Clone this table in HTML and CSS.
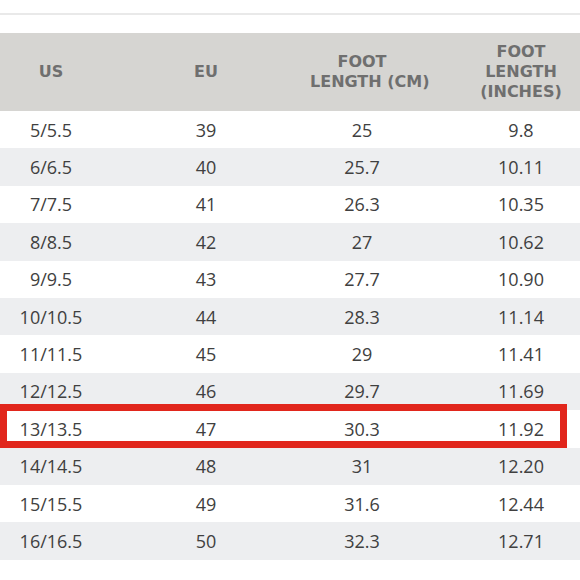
FILE: index.html
```html
<!DOCTYPE html>
<html>
<head>
<meta charset="utf-8">
<link rel="stylesheet" href="styles.css">
</head>
<body>
<div class="page">
  <div class="topline"></div>
  <div class="table">
    <div class="row head">
      <div class="cell">US</div>
      <div class="cell">EU</div>
      <div class="cell">FOOT<br>LENGTH (CM)</div>
      <div class="cell c4">FOOT<br>LENGTH<br>(INCHES)</div>
    </div>
    <div class="row"><div class="cell">5/5.5</div><div class="cell">39</div><div class="cell">25</div><div class="cell c4">9.8</div></div>
    <div class="row alt"><div class="cell">6/6.5</div><div class="cell">40</div><div class="cell">25.7</div><div class="cell c4">10.11</div></div>
    <div class="row"><div class="cell">7/7.5</div><div class="cell">41</div><div class="cell">26.3</div><div class="cell c4">10.35</div></div>
    <div class="row alt"><div class="cell">8/8.5</div><div class="cell">42</div><div class="cell">27</div><div class="cell c4">10.62</div></div>
    <div class="row"><div class="cell">9/9.5</div><div class="cell">43</div><div class="cell">27.7</div><div class="cell c4">10.90</div></div>
    <div class="row alt"><div class="cell">10/10.5</div><div class="cell">44</div><div class="cell">28.3</div><div class="cell c4">11.14</div></div>
    <div class="row"><div class="cell">11/11.5</div><div class="cell">45</div><div class="cell">29</div><div class="cell c4">11.41</div></div>
    <div class="row alt"><div class="cell">12/12.5</div><div class="cell">46</div><div class="cell">29.7</div><div class="cell c4">11.69</div></div>
    <div class="row highlight"><div class="cell">13/13.5</div><div class="cell">47</div><div class="cell">30.3</div><div class="cell c4">11.92</div></div>
    <div class="row alt"><div class="cell">14/14.5</div><div class="cell">48</div><div class="cell">31</div><div class="cell c4">12.20</div></div>
    <div class="row"><div class="cell">15/15.5</div><div class="cell">49</div><div class="cell">31.6</div><div class="cell c4">12.44</div></div>
    <div class="row alt"><div class="cell">16/16.5</div><div class="cell">50</div><div class="cell">32.3</div><div class="cell c4">12.71</div></div>
  </div>
</div>
</body>
</html>
```
FILE: styles.css
```css
html, body {
  margin: 0;
  padding: 0;
  background: #ffffff;
  overflow: hidden;
}
.page {
  width: 580px;
  height: 580px;
  padding-top: 13px;
  box-sizing: border-box;
}
.topline {
  height: 2px;
  background: #e9e9e9;
  margin-bottom: 18px;
}
.table {
  width: 580px;
}
.row {
  display: grid;
  grid-template-columns: 102px 208px 104px 166px;
  height: 37.4px;
  align-items: center;
  font-family: "Open Sans", "Noto Sans", sans-serif;
  font-size: 18px;
  color: #404040;
  background: #ffffff;
}
.row.alt {
  background: #edeef0;
}
.cell {
  text-align: center;
  white-space: nowrap;
}
.cell.c4 {
  padding-left: 48px;
}
.row.head {
  height: 78px;
  background: #d6d5d2;
  font-family: "DejaVu Sans", sans-serif;
  font-weight: bold;
  font-size: 16px;
  line-height: 20px;
  color: #6f6f6f;
}
.row.highlight {
  position: relative;
}
.row.highlight::after {
  content: "";
  position: absolute;
  left: 0;
  right: 13px;
  top: -6px;
  bottom: 0;
  border: 7px solid #e1261c;
}
```
